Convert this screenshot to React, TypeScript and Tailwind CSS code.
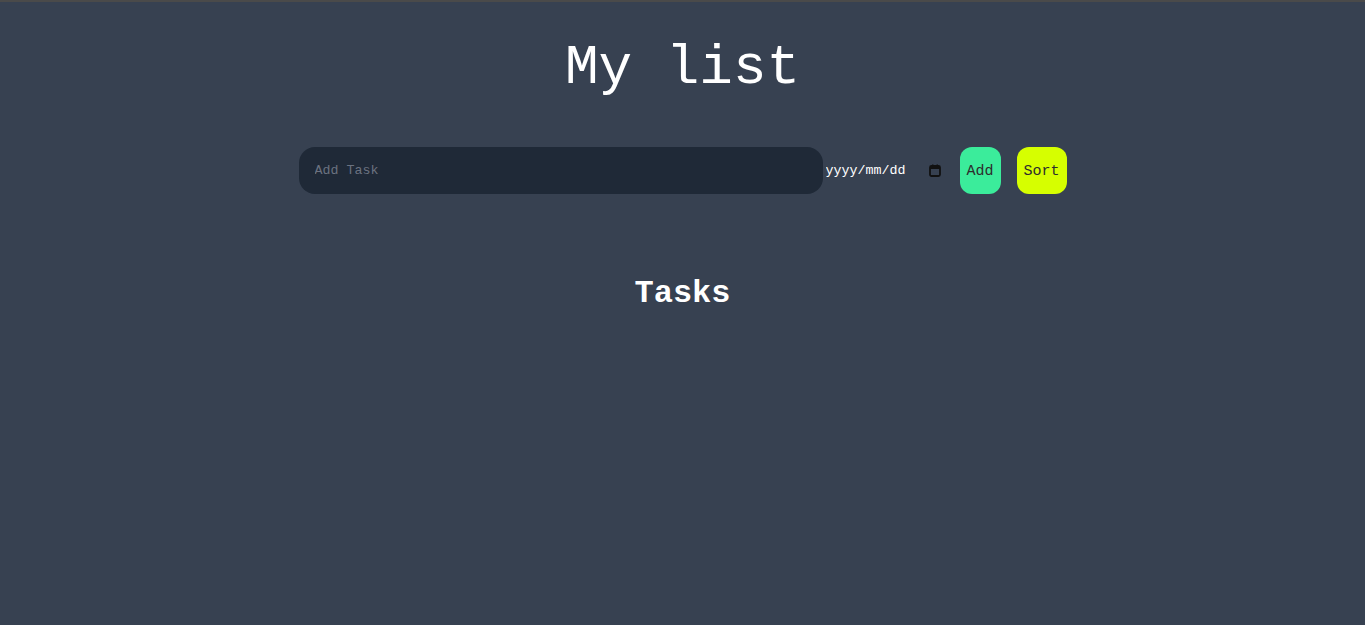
import { useState } from "react";

type Task = { id: number; text: string; date: string };

const CalendarIcon = () => (
    <svg width="12" height="13" viewBox="0 0 12 13" className="shrink-0">
        <rect x="3" y="0.5" width="1.5" height="2" fill="#111" />
        <rect x="7.5" y="0.5" width="1.5" height="2" fill="#111" />
        <rect x="1" y="2" width="10" height="10" rx="1.5" fill="none" stroke="#111" strokeWidth="1.8" />
        <rect x="1" y="2" width="10" height="3" fill="#111" />
    </svg>
);

const App = () => {
    const [tasks, setTasks] = useState<Task[]>([]);
    const [text, setText] = useState("");
    const [date, setDate] = useState("");

    const addTask = () => {
        if (!text.trim()) return;
        setTasks([...tasks, { id: Date.now(), text, date }]);
        setText("");
        setDate("");
    };

    const sortTasks = () => {
        setTasks([...tasks].sort((a, b) => a.date.localeCompare(b.date)));
    };

    return (
        <div className="min-h-screen bg-[#374151] border-t-2 border-[#4a4a4a] font-['Liberation_Mono',monospace] text-white">
            <h1 className="text-center text-[56px] leading-none pt-[38px]">My list</h1>
            <div className="flex items-center justify-center mt-[51px]">
                <input
                    type="text"
                    value={text}
                    onChange={(e) => setText(e.target.value)}
                    placeholder="Add Task"
                    className="w-[524px] h-[47px] rounded-2xl bg-[#1f2937] px-4 text-[13.33px] text-white placeholder:text-[#6b7280] outline-none"
                />
                <label className="flex items-center w-[121px] pl-[3px] pr-[3px] justify-between">
                    <input
                        type="text"
                        value={date}
                        onChange={(e) => setDate(e.target.value)}
                        placeholder="yyyy/mm/dd"
                        className="w-[90px] bg-transparent text-[13.33px] text-white placeholder:text-white outline-none"
                    />
                    <CalendarIcon />
                </label>
                <button
                    onClick={addTask}
                    className="ml-[16px] h-[47px] w-[41px] pt-[4px] rounded-xl bg-[#3bec9b] text-[15px] text-[#2d2d2d]"
                >
                    Add
                </button>
                <button
                    onClick={sortTasks}
                    className="ml-[16px] h-[47px] w-[50px] pt-[4px] rounded-xl bg-[#d6ff00] text-[15px] text-[#2d2d2d]"
                >
                    Sort
                </button>
            </div>
            <h2 className="text-center text-[32px] font-bold mt-[76px]">Tasks</h2>
            <ul className="flex flex-col items-center gap-2 mt-4">
                {tasks.map((t) => (
                    <li key={t.id} className="text-sm">
                        {t.text} {t.date}
                    </li>
                ))}
            </ul>
        </div>
    );
};

export default App;
